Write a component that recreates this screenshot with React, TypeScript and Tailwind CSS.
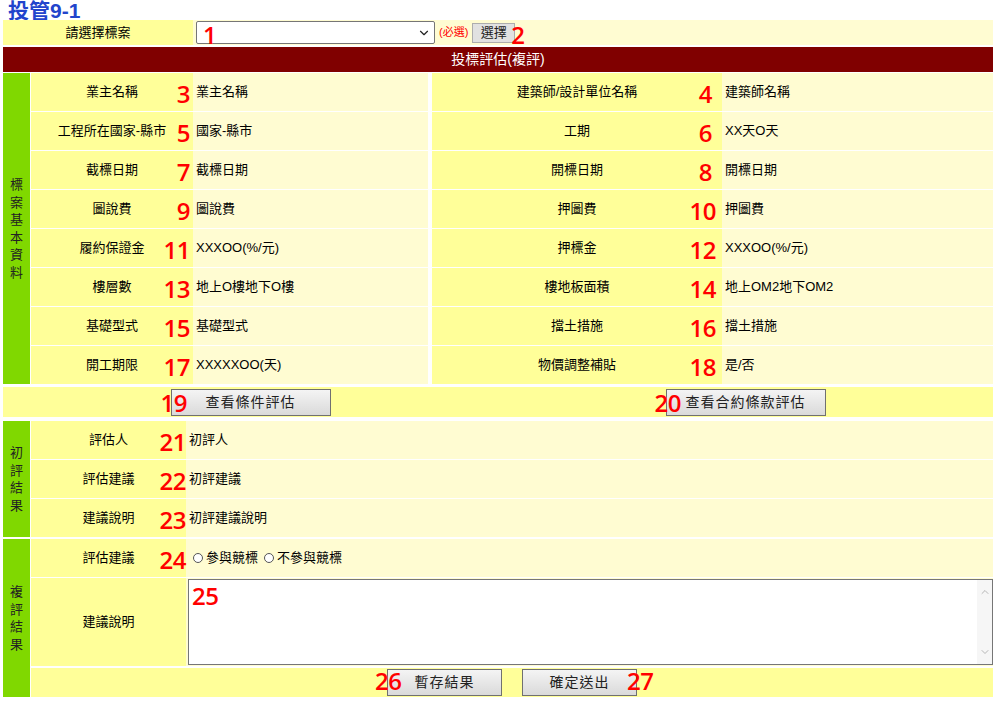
import { ChevronDown, ChevronUp } from "lucide-react";

const CJK = "font-['Liberation_Sans','Noto_Sans_CJK_TC',sans-serif]";

const INFO: [string, number, string, string, number, string][] = [
  ["業主名稱", 3, "業主名稱", "建築師/設計單位名稱", 4, "建築師名稱"],
  ["工程所在國家-縣市", 5, "國家-縣市", "工期", 6, "XX天O天"],
  ["截標日期", 7, "截標日期", "開標日期", 8, "開標日期"],
  ["圖說費", 9, "圖說費", "押圖費", 10, "押圖費"],
  ["履約保證金", 11, "XXXOO(%/元)", "押標金", 12, "XXXOO(%/元)"],
  ["樓層數", 13, "地上O樓地下O樓", "樓地板面積", 14, "地上OM2地下OM2"],
  ["基礎型式", 15, "基礎型式", "擋土措施", 16, "擋土措施"],
  ["開工期限", 17, "XXXXXOO(天)", "物價調整補貼", 18, "是/否"],
];

function Num({ n, className = "" }: { n: number | string; className?: string }) {
  return (
    <span
      className={`pointer-events-none absolute font-['Open_Sans',sans-serif] text-[24px] font-semibold leading-none tracking-[-0.5px] text-[#ff0000] ${className}`}
    >
      {n}
    </span>
  );
}

function Label({
  text,
  n,
  className,
  numClass,
}: {
  text: string;
  n: number;
  className: string;
  numClass: string;
}) {
  return (
    <div className={`relative flex items-center justify-center bg-[#ffff99] ${className}`}>
      <span>{text}</span>
      <Num n={n} className={`top-1/2 -translate-y-[42%] ${numClass}`} />
    </div>
  );
}

function SideTitle({ chars }: { chars: string }) {
  return (
    <div className="flex w-[27px] shrink-0 flex-col items-center justify-center bg-[#80d800] text-[13px] leading-[17.5px] text-[#222]">
      {chars.split("").map((c, i) => (
        <span key={i}>{c}</span>
      ))}
    </div>
  );
}

function Btn({
  children,
  className = "",
}: {
  children: React.ReactNode;
  className?: string;
}) {
  return (
    <button
      className={`relative flex items-center justify-center border border-[#707070] bg-gradient-to-b from-[#f4f4f4] to-[#dadada] text-[14px] tracking-[1px] text-[#222] ${className}`}
    >
      {children}
    </button>
  );
}

function Radio({ label }: { label: string }) {
  return (
    <span className="flex items-center gap-[3px]">
      <span className="h-[10px] w-[10px] rounded-full border border-[#555] bg-white" />
      <span>{label}</span>
    </span>
  );
}

export default function App() {
  return (
    <div className={`h-[712px] w-[1003px] bg-white text-[13px] text-black ${CJK}`}>
      <h1 className="h-[20px] pl-[8px] text-[21px] font-bold leading-[22px] text-[#2244cc]">
        投管9-1
      </h1>

      <div className="ml-[3px] flex w-[990px] flex-col">
        {/* 標案選擇 */}
        <div className="flex h-[25px]">
          <div className="flex w-[190px] items-center justify-center bg-[#ffff99]">請選擇標案</div>
          <div className="flex flex-1 items-center bg-[#fffcd2] pl-[3px]">
            <div className="relative flex h-[23px] w-[239px] items-center justify-end rounded-[2px] border border-[#767676] bg-white pr-[3px]">
              <Num n={1} className="left-[6px] top-[1px]" />
              <ChevronDown size={14} strokeWidth={2} className="text-[#222]" />
            </div>
            <span className="ml-[4px] text-[11px] text-[#ff0000]">(必選)</span>
            <button className="relative ml-[4px] flex h-[20px] w-[43px] items-center justify-center border border-[#adadad] bg-[#e1e1e1] text-[13px] text-[#222]">
              選擇
              <Num n={2} className="left-[38px] top-[-1px]" />
            </button>
          </div>
        </div>

        <div className="mt-[2px] flex h-[25px] items-center justify-center bg-[#800000] text-[14px] text-white">
          投標評估(複評)
        </div>

        {/* 標案基本資料 */}
        <div className="mt-[1px] flex">
          <SideTitle chars="標案基本資料" />
          <div className="ml-[1px] flex flex-1 flex-col gap-[1px]">
            {INFO.map(([l1, n1, v1, l2, n2, v2]) => (
              <div key={n1} className="flex h-[38px]">
                <Label text={l1} n={n1} className="w-[162px]" numClass="right-[3px]" />
                <div className="flex w-[235px] items-center bg-[#fffcd2] pl-[3px]">{v1}</div>
                <div className="w-[4px] bg-white" />
                <Label
                  text={l2}
                  n={n2}
                  className="w-[290px]"
                  numClass={n2 < 10 ? "right-[10px]" : "right-[6px]"}
                />
                <div className="flex flex-1 items-center bg-[#fffcd2] pl-[3px]">{v2}</div>
              </div>
            ))}
          </div>
        </div>

        <div className="mt-[3px] flex h-[30px] bg-[#ffff99]">
          <div className="flex flex-1 items-center justify-center">
            <Btn className="h-[27px] w-[160px]">
              <Num n={19} className="left-[-11px] top-[1px]" />
              查看條件評估
            </Btn>
          </div>
          <div className="flex flex-1 items-center justify-center">
            <Btn className="h-[27px] w-[160px]">
              <Num n={20} className="left-[-12px] top-[1px]" />
              查看合約條款評估
            </Btn>
          </div>
        </div>

        {/* 初評結果 */}
        <div className="mt-[4px] flex">
          <SideTitle chars="初評結果" />
          <div className="ml-[1px] flex flex-1 flex-col gap-[1px]">
            {[
              ["評估人", 21, "初評人"],
              ["評估建議", 22, "初評建議"],
              ["建議說明", 23, "初評建議說明"],
            ].map(([l, n, v]) => (
              <div key={n} className="flex h-[38px]">
                <Label text={l as string} n={n as number} className="w-[155px]" numClass="right-[0px]" />
                <div className="flex flex-1 items-center bg-[#fffcd2] pl-[3px]">{v}</div>
              </div>
            ))}
          </div>
        </div>

        {/* 複評結果 */}
        <div className="mt-[2px] flex">
          <SideTitle chars="複評結果" />
          <div className="ml-[1px] flex flex-1 flex-col">
            <div className="flex h-[38px]">
              <Label text="評估建議" n={24} className="w-[155px]" numClass="right-[0px]" />
              <div className="flex flex-1 items-center gap-[6px] bg-[#fffcd2] pl-[7px]">
                <Radio label="參與競標" />
                <Radio label="不參與競標" />
              </div>
            </div>
            <div className="mt-[1px] flex h-[88px]">
              <div className="flex w-[155px] items-center justify-center bg-[#ffff99]">建議說明</div>
              <div className="flex flex-1 bg-[#fffcd2] py-[1px] pl-[2px]">
                <div className="relative flex flex-1 border border-[#767676] bg-white">
                  <Num n={25} className="left-[3px] top-[4px]" />
                  <div className="ml-auto flex w-[15px] flex-col items-center justify-between bg-[#f6f6f6] py-[6px] text-[#a0a0a0]">
                    <ChevronUp size={12} strokeWidth={1.5} />
                    <ChevronDown size={12} strokeWidth={1.5} />
                  </div>
                </div>
              </div>
            </div>
            <div className="mt-[2px] flex h-[29px] items-center justify-center gap-[20px] bg-[#ffff99]">
              <Btn className="h-[27px] w-[115px]">
                <Num n={26} className="left-[-13px] top-[-1px]" />
                暫存結果
              </Btn>
              <Btn className="h-[27px] w-[115px]">
                確定送出
                <Num n={27} className="left-[104px] top-[-1px]" />
              </Btn>
            </div>
          </div>
        </div>
      </div>
    </div>
  );
}
